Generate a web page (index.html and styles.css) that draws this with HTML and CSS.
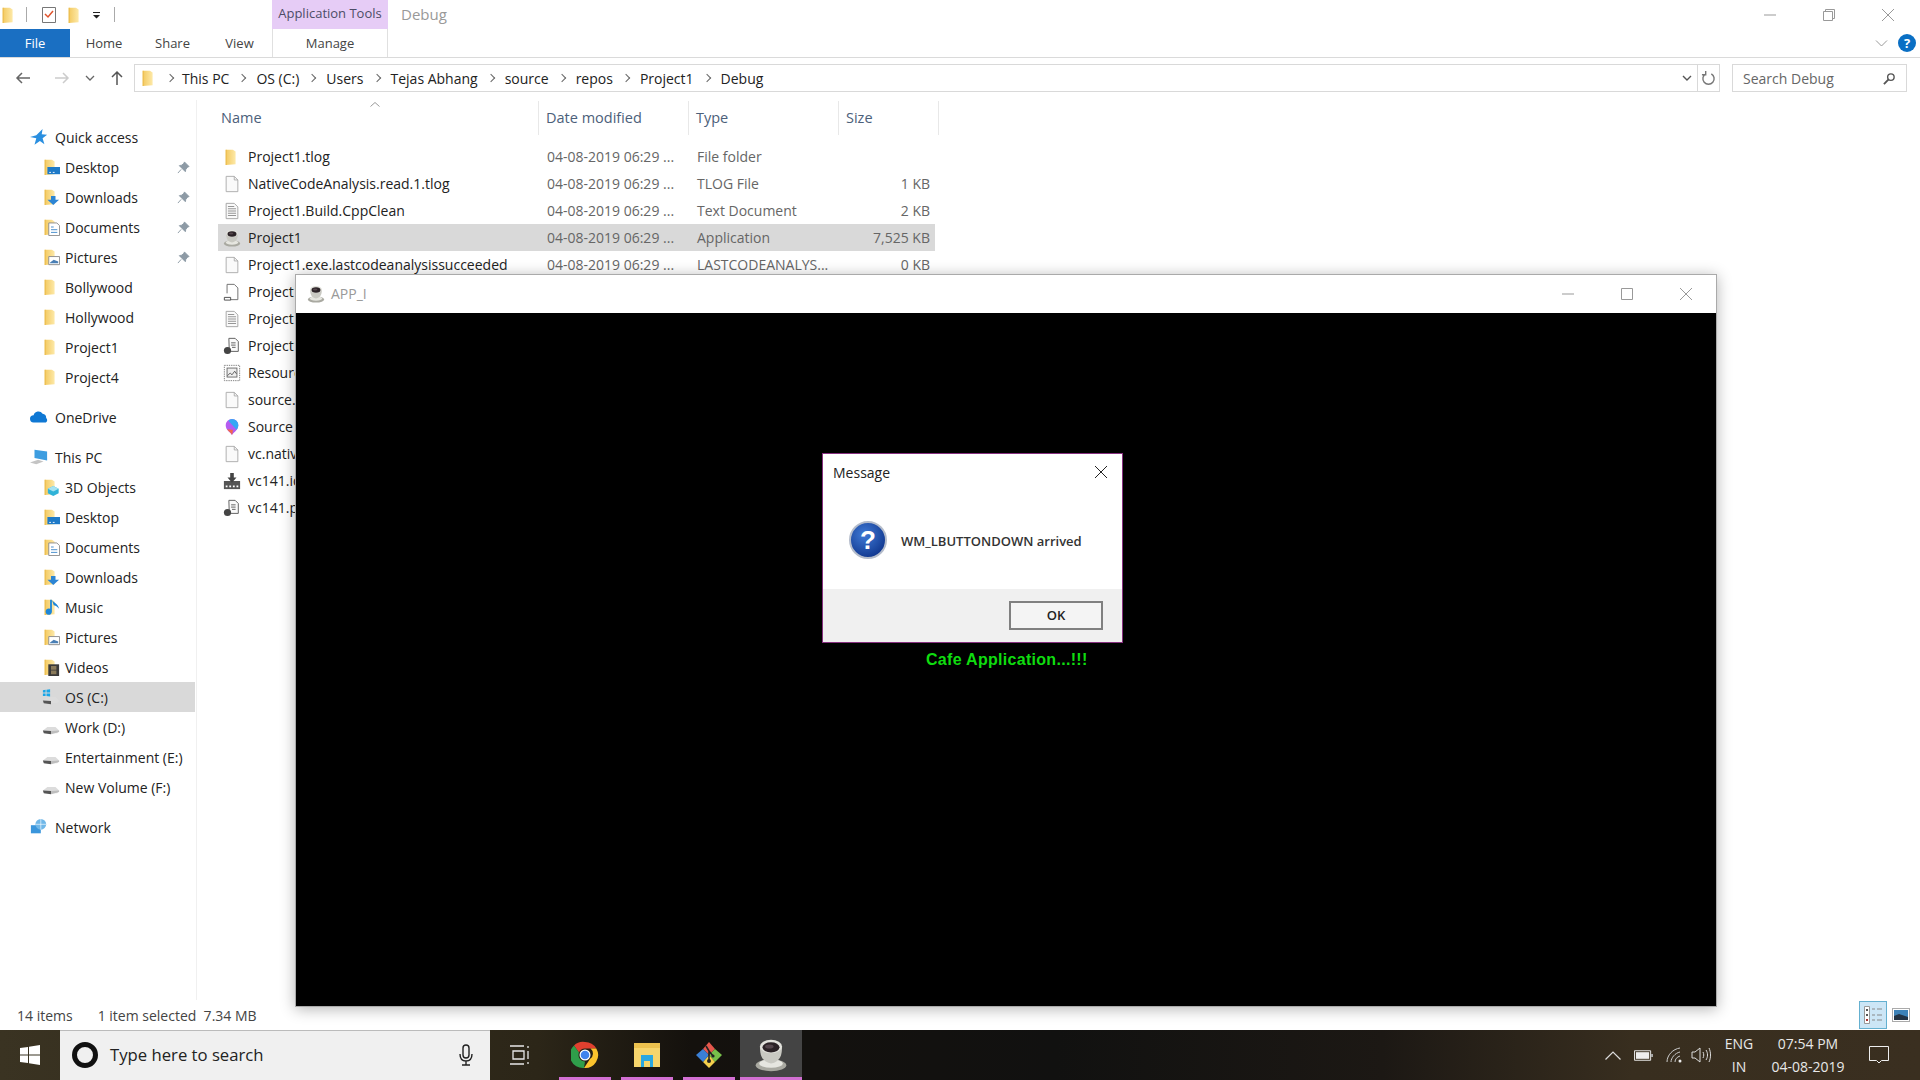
FILE: index.html
```html
<!DOCTYPE html>
<html lang="en">

<head>
    <meta charset="UTF-8">
    <meta name="viewport" content="width=device-width, initial-scale=1.0">
    <title>Debug</title>
    <link rel="stylesheet" href="styles.css">
</head>

<body>

    <!-- Shared icons -->
    <svg class="defs" width="0" height="0">
        <defs>
            <linearGradient id="folderGrad" x1="0" x2="1" y1="0" y2="0">
                <stop offset="0" stop-color="#f3c95f"/>
                <stop offset="1" stop-color="#fde9a8"/>
            </linearGradient>
            <radialGradient id="helpGrad" cx="0.4" cy="0.35" r="0.75">
                <stop offset="0" stop-color="#3f7ad6"/>
                <stop offset="1" stop-color="#0b2f86"/>
            </radialGradient>
            <symbol id="folder" viewBox="0 0 20 20">
                <path d="M3 2h8l3 2v14l-11 1z" fill="url(#folderGrad)"/>
                <path d="M3 2h1v17H3z" fill="#e9b949"/>
            </symbol>
            <symbol id="blank" viewBox="0 0 20 20">
                <path d="M3.500 1.500h9l4 4v13h-13z" fill="#fafafa" stroke="#a9a9a9"/>
                <path d="M12.500 1.500v4h4" fill="none" stroke="#a9a9a9"/>
            </symbol>
            <symbol id="lines" viewBox="0 0 20 20">
                <path d="M3.500 1.500h9l4 4v13h-13z" fill="#fafafa" stroke="#a0a0a0"/>
                <path d="M5.500 5h7M5.500 7.500h9M5.500 10h9M5.500 12.500h9M5.500 15h9" stroke="#8a8a8a"/>
            </symbol>
            <symbol id="linkdoc" viewBox="0 0 20 20">
                <path d="M4.500 1.500h8l4 4v13h-9M4.500 1.500v10" fill="none" stroke="#666"/>
                <path d="M1.500 16h7v3h-7z" fill="#fff" stroke="#444"/>
            </symbol>
            <symbol id="pdb" viewBox="0 0 20 20">
                <path d="M6.500 1.500h7l3.500 3.500v11h-10z" fill="#fafafa" stroke="#555"/>
                <path d="M9 6.500h5M9 9h5M10 11.500h4" stroke="#555"/>
                <circle cx="5" cy="15" r="4" fill="#444"/>
            </symbol>
            <symbol id="res" viewBox="0 0 20 20">
                <rect x="1.500" y="1.500" width="17" height="17" fill="#fff" stroke="#777" stroke-dasharray="1.500 1"/>
                <rect x="4.500" y="4.500" width="11" height="10" fill="#eee" stroke="#666"/>
                <path d="M5 13l3-3 2 2 3-4 2 3" fill="none" stroke="#555"/>
            </symbol>
            <symbol id="balloon" viewBox="0 0 20 20">
                <path d="M10 19c-1-3-7-5-7-11a7 7 0 0 1 14 0c0 6-6 8-7 11z" fill="#b45cf0"/>
                <path d="M10 1a7 7 0 0 1 7 7c0 2-1 4-2 5L6 3c1-1 2.500-2 4-2z" fill="#35a8f5"/>
                <path d="M10 19c-1-3-4-4-5.500-6.500L11 13c0 2-.5 4-1 6z" fill="#f2674e"/>
            </symbol>
            <symbol id="ilk" viewBox="0 0 20 20">
                <path d="M1 10h18v9H1z" fill="#555"/>
                <path d="M8 1h4v5h3l-5 6-5-6h3z" fill="#444"/>
                <path d="M3 15h2v2H3zM7 15h2v2H7zM11 15h2v2h-2zM15 15h2v2h-2z" fill="#fff"/>
            </symbol>
            <symbol id="coffee" viewBox="0 0 20 20">
                <ellipse cx="10" cy="16" rx="9" ry="3.500" fill="#a9a9a1"/>
                <ellipse cx="10" cy="15" rx="7" ry="2.500" fill="#e6e6e0"/>
                <path d="M3.500 5h13c0 5-1 9-6.500 10-5.500-1-6.500-5-6.500-10z" fill="#c9c9c2"/>
                <ellipse cx="10" cy="5" rx="6.500" ry="4" fill="#e2e2dc"/>
                <ellipse cx="10" cy="5.500" rx="5" ry="3" fill="#2b2226"/>
                <ellipse cx="9" cy="5" rx="2.500" ry="1.200" fill="#54464c"/>
            </symbol>
            <symbol id="pin" viewBox="0 0 14 14">
                <path d="M8 1l5 5-1.500.5L9.500 9 9 11.500 2.500 5 5 4.500 7.500 2.500zM4.500 9L1 13" fill="#8d9aa5" stroke="#8d9aa5"/>
            </symbol>
            <symbol id="drive" viewBox="0 0 20 20">
                <path d="M1 14l5-4h9l4 4-2 3H3z" fill="#dcdcdc"/>
                <path d="M1 14l9 .5v3.500l-8-1z" fill="#555"/>
                <path d="M10 14.500l9-.5v1.500l-9 2.500z" fill="#bdbdbd"/>
            </symbol>
            <symbol id="winDrive" viewBox="0 0 20 20">
                <path d="M1 14l5-4h9l4 4-2 3H3z" fill="#dcdcdc"/>
                <path d="M1 14l9 .5v3.500l-8-1z" fill="#555"/>
                <path d="M1 2.500l3-.5v3H1zM5 2l4-.5V5H5zM1 6h3v3H1zM5 6h4v3.500L5 9z" fill="#19a6e8"/>
            </symbol>
        </defs>
    </svg>

    <div class="explorer">

        <!-- Title bar -->
        <div class="titlebar">
            <div class="qat">
                <svg class="ico-sm"><use href="#folder"/></svg>
                <span class="qat-sep"></span>
                <svg class="qat-check" viewBox="0 0 16 18">
                    <path d="M1.500 1.500h13v15h-13z" fill="#fff" stroke="#777"/>
                    <path d="M4 8l3 3 5-6" fill="none" stroke="#e0532c" stroke-width="1.500"/>
                </svg>
                <svg class="ico-sm"><use href="#folder"/></svg>
                <svg class="qat-drop" viewBox="0 0 9 8">
                    <path d="M1 1h7v1H1zM1 4h7L4.500 7.500z" fill="#222"/>
                </svg>
                <span class="qat-sep"></span>
            </div>
            <div class="tool-tab">Application Tools</div>
            <div class="win-title">Debug</div>
            <div class="win-controls">
                <svg viewBox="0 0 12 12"><path d="M0 6h12" stroke="#999"/></svg>
                <svg viewBox="0 0 12 12"><path d="M.5 2.500h9v9h-9zM2.500 2.500v-2h9v9h-2" fill="none" stroke="#999"/></svg>
                <svg viewBox="0 0 12 12"><path d="M0 0l12 12M12 0L0 12" stroke="#999"/></svg>
            </div>
        </div>

        <!-- Ribbon tabs -->
        <div class="ribbon">
            <div class="tab tab-file">File</div>
            <div class="tab tab-home">Home</div>
            <div class="tab tab-share">Share</div>
            <div class="tab tab-view">View</div>
            <div class="tab tab-manage">Manage</div>
            <svg class="ribbon-chevron" viewBox="0 0 12 7"><path d="M.5.5L6 6 11.500.5" fill="none" stroke="#999"/></svg>
            <div class="help">?</div>
        </div>

        <!-- Address bar -->
        <div class="addressbar">
            <div class="nav-arrows">
                <svg class="arrow arrow-back" viewBox="0 0 16 14"><path d="M15 7H2M7 2L2 7l5 5" fill="none" stroke="#666" stroke-width="1.500"/></svg>
                <svg class="arrow arrow-fwd" viewBox="0 0 16 14"><path d="M1 7h13M9 2l5 5-5 5" fill="none" stroke="#ccc" stroke-width="1.500"/></svg>
                <svg class="arrow arrow-down" viewBox="0 0 10 7"><path d="M1 1l4 4 4-4" fill="none" stroke="#666" stroke-width="1.300"/></svg>
                <svg class="arrow arrow-up" viewBox="0 0 14 16"><path d="M7 15V2M2 7l5-5 5 5" fill="none" stroke="#555" stroke-width="1.500"/></svg>
            </div>
            <div class="address">
                <svg class="ico-addr"><use href="#folder"/></svg>
                <span class="crumb-sep"></span><span class="crumb">This PC</span>
                <span class="crumb-sep"></span><span class="crumb">OS (C:)</span>
                <span class="crumb-sep"></span><span class="crumb">Users</span>
                <span class="crumb-sep"></span><span class="crumb">Tejas Abhang</span>
                <span class="crumb-sep"></span><span class="crumb">source</span>
                <span class="crumb-sep"></span><span class="crumb">repos</span>
                <span class="crumb-sep"></span><span class="crumb">Project1</span>
                <span class="crumb-sep"></span><span class="crumb">Debug</span>
                <svg class="addr-drop" viewBox="0 0 10 7"><path d="M1 1l4 4 4-4" fill="none" stroke="#555" stroke-width="1.400"/></svg>
                <div class="addr-refresh">
                    <svg viewBox="0 0 16 16"><path d="M5 3a6 6 0 1 0 6 0M5 0v4H1" fill="none" stroke="#777" stroke-width="1.500"/></svg>
                </div>
            </div>
            <div class="search">
                <span>Search Debug</span>
                <svg viewBox="0 0 14 14"><circle cx="8.500" cy="5.500" r="3.500" fill="none" stroke="#555" stroke-width="1.500"/><path d="M6 8l-5 5" stroke="#555" stroke-width="2"/></svg>
            </div>
        </div>

        <div class="main">

            <!-- Navigation pane -->
            <nav class="navpane">
                <div class="nav-group">
                    <div class="nav-item top">
                        <svg class="nav-ico" viewBox="0 0 20 20"><path d="M14 1l-1 6 6 .5-5 4 2 6.500-5-3.500-6 4 2-7L0 10l7-2z" fill="#2a8fe0"/></svg>
                        Quick access
                    </div>
                    <div class="nav-item">
                        <svg class="nav-ico" viewBox="0 0 20 20"><use href="#folder"/><path d="M6 10h14v8H6z" fill="#1e7ac8"/><path d="M8 16h2M12 16h2" stroke="#fff"/></svg>
                        Desktop
                        <svg class="pin"><use href="#pin"/></svg>
                    </div>
                    <div class="nav-item">
                        <svg class="nav-ico" viewBox="0 0 20 20"><use href="#folder"/><path d="M10 9h5v4h4l-6.500 6L6 13h4z" fill="#2c85d4"/></svg>
                        Downloads
                        <svg class="pin"><use href="#pin"/></svg>
                    </div>
                    <div class="nav-item">
                        <svg class="nav-ico" viewBox="0 0 20 20"><use href="#folder"/><path d="M7.500 5.500h9l3 3v11h-12z" fill="#fff" stroke="#888"/><path d="M10 10h3M10 13h7M10 16h7" stroke="#3a86c8"/></svg>
                        Documents
                        <svg class="pin"><use href="#pin"/></svg>
                    </div>
                    <div class="nav-item">
                        <svg class="nav-ico" viewBox="0 0 20 20"><use href="#folder"/><path d="M7.500 9.500h12v9h-12z" fill="#fff" stroke="#888"/><path d="M9 16l4-3 5 2v2H9z" fill="#4a7fb5"/></svg>
                        Pictures
                        <svg class="pin"><use href="#pin"/></svg>
                    </div>
                    <div class="nav-item"><svg class="nav-ico"><use href="#folder"/></svg>Bollywood</div>
                    <div class="nav-item"><svg class="nav-ico"><use href="#folder"/></svg>Hollywood</div>
                    <div class="nav-item"><svg class="nav-ico"><use href="#folder"/></svg>Project1</div>
                    <div class="nav-item"><svg class="nav-ico"><use href="#folder"/></svg>Project4</div>
                </div>

                <div class="nav-group">
                    <div class="nav-item top">
                        <svg class="nav-ico" viewBox="0 0 20 20"><path d="M4 16a4 4 0 0 1 0-8 5.500 5.500 0 0 1 10-1.500A4.500 4.500 0 0 1 18 11c2 2 1 5-1 5z" fill="#0f78d4"/></svg>
                        OneDrive
                    </div>
                </div>

                <div class="nav-group">
                    <div class="nav-item top">
                        <svg class="nav-ico" viewBox="0 0 20 20"><path d="M5 2l14 2v10L5 11z" fill="#3d9de0"/><path d="M0 16l9-3 6 2-8 3z" fill="#c4c4c4"/></svg>
                        This PC
                    </div>
                    <div class="nav-item">
                        <svg class="nav-ico" viewBox="0 0 20 20"><use href="#folder"/><path d="M12.500 9l6 3v5l-6 3-6-3v-5z" fill="#30b3d8"/><path d="M12.500 9l6 3-6 3-6-3z" fill="#a5e3f2"/></svg>
                        3D Objects
                    </div>
                    <div class="nav-item">
                        <svg class="nav-ico" viewBox="0 0 20 20"><use href="#folder"/><path d="M6 10h14v8H6z" fill="#1e7ac8"/><path d="M8 16h2M12 16h2" stroke="#fff"/></svg>
                        Desktop
                    </div>
                    <div class="nav-item">
                        <svg class="nav-ico" viewBox="0 0 20 20"><use href="#folder"/><path d="M7.500 5.500h9l3 3v11h-12z" fill="#fff" stroke="#888"/><path d="M10 10h3M10 13h7M10 16h7" stroke="#3a86c8"/></svg>
                        Documents
                    </div>
                    <div class="nav-item">
                        <svg class="nav-ico" viewBox="0 0 20 20"><use href="#folder"/><path d="M10 9h5v4h4l-6.500 6L6 13h4z" fill="#2c85d4"/></svg>
                        Downloads
                    </div>
                    <div class="nav-item">
                        <svg class="nav-ico" viewBox="0 0 20 20"><use href="#folder"/><path d="M11 2v13a3.500 3.500 0 1 1-2-3V2h2c1 3 7 4 8 10-2-3-5-4-6-4" fill="#1d86d8"/></svg>
                        Music
                    </div>
                    <div class="nav-item">
                        <svg class="nav-ico" viewBox="0 0 20 20"><use href="#folder"/><path d="M7.500 9.500h12v9h-12z" fill="#fff" stroke="#888"/><path d="M9 16l4-3 5 2v2H9z" fill="#4a7fb5"/></svg>
                        Pictures
                    </div>
                    <div class="nav-item">
                        <svg class="nav-ico" viewBox="0 0 20 20"><use href="#folder"/><path d="M7 7h12v13H7z" fill="#3a3a3a"/><path d="M10 9h6v4h-6zM10 14h6v4h-6z" fill="#8a7a5a"/></svg>
                        Videos
                    </div>
                    <div class="nav-item selected"><svg class="nav-ico"><use href="#winDrive"/></svg>OS (C:)</div>
                    <div class="nav-item"><svg class="nav-ico"><use href="#drive"/></svg>Work (D:)</div>
                    <div class="nav-item"><svg class="nav-ico"><use href="#drive"/></svg>Entertainment (E:)</div>
                    <div class="nav-item"><svg class="nav-ico"><use href="#drive"/></svg>New Volume (F:)</div>
                </div>

                <div class="nav-group">
                    <div class="nav-item top">
                        <svg class="nav-ico" viewBox="0 0 20 20"><rect x="1" y="8" width="11" height="9" fill="#3a96dc"/><circle cx="12" cy="7" r="6" fill="#6fb7e8"/><path d="M6 7h12M12 1v12" stroke="#fff" stroke-width=".7"/></svg>
                        Network
                    </div>
                </div>
            </nav>

            <!-- File list -->
            <section class="files">
                <div class="file-head">
                    <div class="col-name">Name</div>
                    <div class="col">Date modified</div>
                    <div class="col">Type</div>
                    <div class="col col-size">Size</div>
                    <svg class="sort" viewBox="0 0 10 5"><path d="M.5 4.500L5 .5l4.500 4" fill="none" stroke="#999"/></svg>
                </div>
                <div class="row">
                    <svg class="file-ico"><use href="#folder"/></svg>
                    <span class="name">Project1.tlog</span><span class="meta">04-08-2019 06:29 ...</span><span class="meta">File folder</span><span class="meta size"></span>
                </div>
                <div class="row">
                    <svg class="file-ico"><use href="#blank"/></svg>
                    <span class="name">NativeCodeAnalysis.read.1.tlog</span><span class="meta">04-08-2019 06:29 ...</span><span class="meta">TLOG File</span><span class="meta size">1 KB</span>
                </div>
                <div class="row">
                    <svg class="file-ico"><use href="#lines"/></svg>
                    <span class="name">Project1.Build.CppClean</span><span class="meta">04-08-2019 06:29 ...</span><span class="meta">Text Document</span><span class="meta size">2 KB</span>
                </div>
                <div class="row active">
                    <svg class="file-ico"><use href="#coffee"/></svg>
                    <span class="name">Project1</span><span class="meta">04-08-2019 06:29 ...</span><span class="meta">Application</span><span class="meta size">7,525 KB</span>
                </div>
                <div class="row">
                    <svg class="file-ico"><use href="#blank"/></svg>
                    <span class="name">Project1.exe.lastcodeanalysissucceeded</span><span class="meta">04-08-2019 06:29 ...</span><span class="meta">LASTCODEANALYS...</span><span class="meta size">0 KB</span>
                </div>
                <div class="row"><svg class="file-ico"><use href="#linkdoc"/></svg><span class="name">Project1.ilk</span></div>
                <div class="row"><svg class="file-ico"><use href="#lines"/></svg><span class="name">Project1.log</span></div>
                <div class="row"><svg class="file-ico"><use href="#pdb"/></svg><span class="name">Project1.pdb</span></div>
                <div class="row"><svg class="file-ico"><use href="#res"/></svg><span class="name">Resource.res</span></div>
                <div class="row"><svg class="file-ico"><use href="#blank"/></svg><span class="name">source.obj</span></div>
                <div class="row"><svg class="file-ico"><use href="#balloon"/></svg><span class="name">Source</span></div>
                <div class="row"><svg class="file-ico"><use href="#blank"/></svg><span class="name">vc.native</span></div>
                <div class="row"><svg class="file-ico"><use href="#ilk"/></svg><span class="name">vc141.idb</span></div>
                <div class="row"><svg class="file-ico"><use href="#pdb"/></svg><span class="name">vc141.pdb</span></div>
            </section>
        </div>

        <!-- Status bar -->
        <div class="statusbar">
            <span class="status-count">14 items</span>
            <span>1 item selected&nbsp; 7.34 MB</span>
            <div class="views">
                <div class="view view-on">
                    <svg viewBox="0 0 20 20">
                        <path d="M1.500 1.500h5v17h-5z" fill="#fff" stroke="#999"/>
                        <path d="M3 4h2v2H3zM3 9h2v2H3z" fill="#555"/>
                        <path d="M3 14h2v2H3z" fill="#a33"/>
                        <path d="M9 4h3M14 4h5M9 10h3M14 10h5M9 15h3M14 15h5" stroke="#888"/>
                    </svg>
                </div>
                <div class="view">
                    <svg viewBox="0 0 18 14">
                        <rect x=".5" y=".5" width="17" height="13" fill="#fff" stroke="#aaa"/>
                        <rect x="2" y="2" width="14" height="10" fill="#3c82b8"/>
                        <path d="M2 8l5-2 9 3v3H2z" fill="#234"/>
                    </svg>
                </div>
            </div>
        </div>
    </div>

    <!-- Taskbar -->
    <footer class="taskbar">
        <div class="start">
            <svg viewBox="0 0 20 20"><path d="M0 3l8-1.100V9.500H0zM9 1.700L20 0v9.500H9zM0 10.500h8v7.600L0 17zM9 10.500h11V20L9 18.300z" fill="#fff"/></svg>
        </div>
        <div class="tb-search">
            <span class="cortana"></span>
            <span class="tb-search-text">Type here to search</span>
            <svg class="mic" viewBox="0 0 14 22"><rect x="4" y="1" width="6" height="13" rx="3" fill="none" stroke="#222" stroke-width="1.400"/><path d="M1 10c0 5 2 7 6 7s6-2 6-7M7 17v4M3 21h8" fill="none" stroke="#222" stroke-width="1.400"/></svg>
        </div>
        <div class="taskview">
            <svg viewBox="0 0 20 20"><path d="M0 1h14M0 19h14M3 6h11v8H3z" fill="none" stroke="#e8e8e8" stroke-width="1.300"/><path d="M18 1v2M18 6v8M18 17v2" stroke="#e8e8e8" stroke-width="1.300"/></svg>
        </div>
        <div class="task running">
            <svg viewBox="0 0 28 28">
                <path d="M14 1a13 13 0 0 1 11.300 6.500H14a6.500 6.500 0 0 0-6 4L3 4.500A13 13 0 0 1 14 1z" fill="#e0402f"/>
                <path d="M25.300 7.500A13 13 0 0 1 13 27l6-9a6.500 6.500 0 0 0 .5-10.500z" fill="#fbc32d"/>
                <path d="M3 4.500l5 7a6.500 6.500 0 0 0 6 9l-1 6.500A13 13 0 0 1 3 4.500z" fill="#2f9e4a"/>
                <circle cx="14" cy="14" r="5.500" fill="#fff"/>
                <circle cx="14" cy="14" r="4.300" fill="#3f83ee"/>
            </svg>
        </div>
        <div class="task running">
            <svg viewBox="0 0 28 28">
                <path d="M1 2h10l2 3h14v21H1z" fill="#f6d56c"/>
                <path d="M1 2h26v5H1z" fill="#ecc14e"/>
                <path d="M8 14h12v12h-3v-6h-6v6H8z" fill="#2aa7e0"/>
            </svg>
        </div>
        <div class="task running">
            <svg viewBox="0 0 28 28">
                <path d="M14 1l6 7-6 6-6-6z" fill="#e4574c"/>
                <path d="M20 8l7 6-7 7-6-7z" fill="#77c04a"/>
                <path d="M14 14l6 7-6 6-6-6z" fill="#f4cf4c"/>
                <path d="M8 8l6 6-6 7-7-7z" fill="#3a7fd5"/>
                <path d="M11 5l3 5 4 5M14 10v10" fill="none" stroke="#222" stroke-width="1.600"/>
                <circle cx="14" cy="20" r="2" fill="#222"/>
                <circle cx="18" cy="15" r="1.600" fill="#222"/>
            </svg>
        </div>
        <div class="task task-app">
            <svg><use href="#coffee"/></svg>
        </div>
        <div class="tray">
            <svg class="tray-chev" viewBox="0 0 16 9"><path d="M.5 8.500L8 1l7.500 7.500" fill="none" stroke="#ddd" stroke-width="1.200"/></svg>
            <svg class="tray-batt" viewBox="0 0 20 11"><path d="M.5.5h17v10H.5z" fill="none" stroke="#eee"/><path d="M2 2h14v7H2z" fill="#eee"/><path d="M18 4h2v3h-2z" fill="#aaa"/></svg>
            <svg class="tray-wifi" viewBox="0 0 16 16"><path d="M1 15C1 8 7 2 14 1M5 15c0-4 4-9 9-10M9 15c0-3 2-5 5-6" fill="none" stroke="#ccc"/><circle cx="14" cy="14" r="1.500" fill="#eee"/></svg>
            <svg class="tray-vol" viewBox="0 0 20 16"><path d="M1 5h3l5-4v14l-5-4H1z" fill="none" stroke="#ddd"/><path d="M12 5c1 2 1 4 0 6M15 3c2 3 2 7 0 10M18 1c2 4 2 10 0 14" fill="none" stroke="#ddd"/></svg>
            <div class="tray-lang"><span>ENG</span><span>IN</span></div>
            <div class="tray-clock"><span>07:54 PM</span><span>04-08-2019</span></div>
            <svg class="tray-note" viewBox="0 0 20 18"><path d="M.5.5h19v14h-7l-2.500 2.500L7.500 14.500h-7z" fill="none" stroke="#eee"/></svg>
        </div>
    </footer>

    <!-- Application window over the explorer -->
    <div class="app-window">
        <div class="app-title">
            <svg class="app-ico"><use href="#coffee"/></svg>
            <span class="app-name">APP_I</span>
            <div class="app-controls">
                <svg viewBox="0 0 12 12"><path d="M0 6h12" stroke="#999"/></svg>
                <svg viewBox="0 0 12 12"><path d="M.5.5h11v11H.5z" fill="none" stroke="#999"/></svg>
                <svg viewBox="0 0 12 12"><path d="M0 0l12 12M12 0L0 12" stroke="#999"/></svg>
            </div>
        </div>
        <div class="app-client"></div>
    </div>

    <div class="cafe">Cafe Application...!!!</div>

    <!-- Message box -->
    <div class="msgbox">
        <div class="msg-title">
            <span>Message</span>
            <svg viewBox="0 0 12 12"><path d="M0 0l12 12M12 0L0 12" stroke="#222"/></svg>
        </div>
        <div class="msg-body">
            <svg class="msg-ico" viewBox="0 0 38 38">
                <circle cx="19" cy="19" r="18" fill="url(#helpGrad)" stroke="#b4bccb" stroke-width="2"/>
                <text x="19" y="28" text-anchor="middle" class="msg-q">?</text>
            </svg>
            <span class="msg-text">WM_LBUTTONDOWN arrived</span>
        </div>
        <div class="msg-foot">
            <div class="msg-ok">OK</div>
        </div>
    </div>

</body>

</html>
```

FILE: styles.css
```css
html,
body {
    margin: 0;
    height: 1080px;
    overflow: hidden;
    background-color: #fff;
}

body {
    position: relative;
    font-family: "Open Sans", "Noto Sans", sans-serif;
    font-size: 14px;
    color: #222;
}

.defs {
    position: absolute;
}

svg {
    display: block;
    flex: none;
}

.explorer {
    display: flex;
    flex-direction: column;
    height: 1030px;
}

/* Title bar */
.titlebar {
    display: flex;
    height: 29px;
}

.qat {
    display: flex;
    align-items: center;
    width: 272px;
    box-sizing: border-box;
}

.ico-sm {
    width: 18px;
    height: 18px;
}

.qat-sep {
    width: 1px;
    height: 15px;
    background-color: #aaa;
    margin: 0 14px 0 8px;
}

.qat-check {
    width: 16px;
    height: 18px;
    margin-right: 9px;
}

.qat-drop {
    width: 9px;
    height: 8px;
    margin-left: 8px;
}

.qat .qat-sep:last-child {
    margin-left: 13px;
}

.tool-tab {
    width: 116px;
    background-color: #e6ccf6;
    color: #4c4c66;
    font-size: 13px;
    text-align: center;
    line-height: 27px;
}

.win-title {
    margin-left: 13px;
    color: #999;
    font-size: 15px;
    line-height: 29px;
}

.win-controls {
    display: flex;
    align-items: center;
    gap: 47px;
    margin-left: auto;
    padding-right: 26px;
}

.win-controls svg {
    width: 12px;
    height: 12px;
}

/* Ribbon */
.ribbon {
    display: flex;
    align-items: center;
    height: 28px;
    border-bottom: 1px solid #dadada;
    font-size: 13px;
    color: #444;
}

.tab {
    line-height: 28px;
    text-align: center;
}

.tab-file {
    width: 70px;
    background-color: #1a6fc2;
    color: #fff;
}

.tab-home {
    width: 68px;
}

.tab-share {
    width: 69px;
}

.tab-view {
    width: 65px;
}

.tab-manage {
    width: 116px;
    box-sizing: border-box;
    border-left: 1px solid #e0e0e0;
    border-right: 1px solid #e0e0e0;
}

.ribbon-chevron {
    width: 13px;
    height: 7px;
    margin-left: auto;
}

.help {
    width: 18px;
    height: 18px;
    margin: 0 4px 0 10px;
    border-radius: 50%;
    background-color: #0a6fc4;
    color: #fff;
    font-size: 13px;
    font-weight: 700;
    line-height: 18px;
    text-align: center;
}

/* Address bar */
.addressbar {
    display: flex;
    align-items: center;
    height: 42px;
    padding: 0 12px 2px 0;
    box-sizing: border-box;
}

.nav-arrows {
    display: flex;
    align-items: center;
    width: 134px;
    flex: none;
}

.arrow-back {
    width: 16px;
    height: 14px;
    margin-left: 15px;
}

.arrow-fwd {
    width: 16px;
    height: 14px;
    margin-left: 23px;
}

.arrow-down {
    width: 10px;
    height: 7px;
    margin-left: 15px;
}

.arrow-up {
    width: 14px;
    height: 16px;
    margin-left: 15px;
}

.address {
    display: flex;
    align-items: center;
    width: 1586px;
    height: 28px;
    box-sizing: border-box;
    border: 1px solid #d9d9d9;
    padding-left: 5px;
    font-size: 14px;
    color: #222;
}

.ico-addr {
    width: 18px;
    height: 18px;
}

.crumb-sep {
    width: 5px;
    height: 5px;
    margin: 0 11px 0 10px;
    border-top: 1px solid #666;
    border-right: 1px solid #666;
    transform: rotate(45deg);
}

.ico-addr + .crumb-sep {
    margin-left: 9px;
    margin-right: 9px;
}

.addr-drop {
    width: 10px;
    height: 7px;
    margin-left: auto;
    margin-right: 5px;
}

.addr-refresh {
    display: flex;
    align-items: center;
    justify-content: center;
    width: 21px;
    height: 100%;
    border-left: 1px solid #d9d9d9;
}

.addr-refresh svg {
    width: 15px;
    height: 15px;
}

.search {
    display: flex;
    align-items: center;
    justify-content: space-between;
    width: 175px;
    height: 28px;
    margin-left: 12px;
    box-sizing: border-box;
    border: 1px solid #d9d9d9;
    padding: 0 10px;
    font-size: 14px;
    color: #666;
}

.search svg {
    width: 13px;
    height: 13px;
}

/* Main area */
.main {
    display: flex;
    flex: 1;
    min-height: 0;
}

.navpane {
    width: 197px;
    padding-top: 22px;
    border-right: 1px solid #f0f0f0;
    box-sizing: border-box;
}

.nav-group {
    margin-bottom: 10px;
}

.nav-item {
    display: flex;
    align-items: center;
    width: 195px;
    height: 30px;
    padding-left: 42px;
    box-sizing: border-box;
}

.nav-item.top {
    padding-left: 30px;
}

.nav-item.selected {
    background-color: #d9d9d9;
}

.nav-ico {
    width: 18px;
    height: 18px;
    margin-right: 5px;
}

.nav-item.top .nav-ico {
    margin-right: 7px;
}

.pin {
    width: 13px;
    height: 13px;
    margin-left: auto;
    margin-right: 5px;
}

.files {
    position: relative;
    flex: 1;
    padding-left: 21px;
}

.file-head {
    display: flex;
    align-items: flex-start;
    height: 42px;
    padding-top: 1px;
    color: #4c607a;
    font-size: 14.5px;
}

.col-name {
    width: 321px;
    padding-left: 3px;
    height: 34px;
    line-height: 34px;
    box-sizing: border-box;
    border-right: 1px solid #e8e8e8;
}

.col {
    width: 150px;
    height: 34px;
    line-height: 34px;
    padding-left: 7px;
    box-sizing: border-box;
    border-right: 1px solid #e8e8e8;
}

.col-size {
    width: 100px;
}

.sort {
    position: absolute;
    left: 173px;
    top: 2px;
    width: 10px;
    height: 5px;
}

.row {
    display: grid;
    grid-template-columns: 30px 299px 150px 150px 88px;
    align-items: center;
    width: 717px;
    height: 27px;
    white-space: nowrap;
}

.row.active {
    background-color: #d9d9d9;
}

.file-ico {
    width: 18px;
    height: 18px;
    margin-left: 5px;
}

.meta {
    color: #666;
}

.meta.size {
    text-align: right;
    padding-right: 5px;
}

/* Status bar */
.statusbar {
    display: flex;
    align-items: center;
    flex: none;
    height: 30px;
    padding-left: 17px;
    font-size: 14px;
    color: #444;
}

.status-count {
    margin-right: 25px;
}

.views {
    display: flex;
    align-items: center;
    gap: 5px;
    margin-left: auto;
    padding-right: 10px;
}

.view svg {
    width: 18px;
    height: 14px;
}

.view-on {
    display: flex;
    align-items: center;
    justify-content: center;
    width: 28px;
    height: 28px;
    box-sizing: border-box;
    border: 1px solid #64b0d0;
    background-color: #cce6f6;
}

.view-on svg {
    width: 20px;
    height: 20px;
}

/* Taskbar */
.taskbar {
    display: flex;
    height: 50px;
    color: #e8e8e8;
    background: linear-gradient(90deg, #3a3322 0%, #2c2618 28%, #14110d 36%, #111110 55%, #1c1814 72%, #382e1f 85%, #3a2f20 100%);
}

.start {
    display: flex;
    align-items: center;
    justify-content: center;
    width: 60px;
}

.start svg {
    width: 20px;
    height: 20px;
}

.tb-search {
    display: flex;
    align-items: center;
    width: 430px;
    box-sizing: border-box;
    padding: 0 17px 2px 12px;
    background-color: #f0f0f0;
    border-top: 1px solid #bbb;
    color: #222;
    font-size: 16.7px;
}

.cortana {
    width: 16px;
    height: 16px;
    border: 5px solid #111;
    border-radius: 50%;
}

.tb-search-text {
    margin-left: 12px;
}

.mic {
    width: 14px;
    height: 22px;
    margin-left: auto;
}

.taskview {
    display: flex;
    align-items: center;
    width: 64px;
    padding-left: 20px;
    box-sizing: border-box;
}

.taskview svg {
    width: 20px;
    height: 20px;
}

.task {
    display: flex;
    align-items: center;
    justify-content: center;
    width: 62px;
    position: relative;
}

.task svg {
    width: 28px;
    height: 28px;
}

.task.running::after,
.task-app::after {
    content: "";
    position: absolute;
    left: 5px;
    right: 5px;
    bottom: 0;
    height: 3px;
    background-color: #d26fd2;
}

.task-app {
    background-color: #444;
}

.task-app::after {
    left: 0;
    right: 0;
}

.task-app svg {
    width: 34px;
    height: 34px;
}

.tray {
    display: flex;
    align-items: center;
    margin-left: auto;
    padding-right: 31px;
    font-size: 14px;
    text-align: center;
}

.tray-chev {
    width: 16px;
    height: 9px;
}

.tray-batt {
    width: 19px;
    height: 11px;
    margin-left: 13px;
}

.tray-wifi {
    width: 16px;
    height: 16px;
    margin-left: 13px;
}

.tray-vol {
    width: 20px;
    height: 16px;
    margin-left: 9px;
}

.tray-lang,
.tray-clock {
    display: flex;
    flex-direction: column;
    gap: 1px;
    line-height: 22px;
}

.tray-lang {
    margin-left: 11px;
    width: 34px;
}

.tray-clock {
    margin-left: 12px;
    width: 80px;
}

.tray-note {
    width: 20px;
    height: 18px;
    margin-left: 21px;
}

/* Application window */
.app-window {
    position: absolute;
    left: 295px;
    top: 274px;
    width: 1422px;
    height: 733px;
    box-sizing: border-box;
    border: 1px solid #aaa;
    display: flex;
    flex-direction: column;
    background-color: #fff;
    box-shadow: 0 2px 14px rgba(0, 0, 0, 0.3);
}

.app-title {
    display: flex;
    align-items: center;
    height: 38px;
    flex: none;
    padding-left: 11px;
    color: #999;
}

.app-name {
    margin-bottom: 2px;
}

.app-ico {
    width: 18px;
    height: 18px;
    margin-right: 6px;
}

.app-controls {
    display: flex;
    gap: 47px;
    margin-left: auto;
    padding-right: 24px;
}

.app-controls svg {
    width: 12px;
    height: 12px;
}

.app-client {
    flex: 1;
    background-color: #000;
}

.cafe {
    position: absolute;
    left: 926px;
    top: 648px;
    color: #0fdc0f;
    font-family: "Liberation Sans", sans-serif;
    font-size: 16px;
    font-weight: 700;
    letter-spacing: 0.3px;
    line-height: 24px;
}

/* Message box */
.msgbox {
    position: absolute;
    left: 822px;
    top: 453px;
    width: 301px;
    height: 190px;
    box-sizing: border-box;
    border: 1px solid #86307f;
    display: flex;
    flex-direction: column;
    background-color: #fff;
}

.msg-title {
    display: flex;
    align-items: center;
    justify-content: space-between;
    height: 36px;
    padding: 0 15px 0 10px;
}

.msg-title svg {
    width: 12px;
    height: 12px;
}

.msg-body {
    display: flex;
    align-items: center;
    flex: 1;
    padding-left: 26px;
}

.msg-ico {
    width: 38px;
    height: 38px;
    margin-right: 14px;
}

.msg-q {
    fill: #fff;
    font-family: "Liberation Sans", sans-serif;
    font-size: 26px;
    font-weight: 700;
}

.msg-text {
    margin-top: 3px;
    font-size: 13px;
    font-weight: 600;
    color: #333;
    white-space: nowrap;
}

.msg-foot {
    display: flex;
    align-items: center;
    justify-content: flex-end;
    height: 53px;
    padding-right: 19px;
    background-color: #f0f0f0;
}

.msg-ok {
    width: 94px;
    height: 29px;
    box-sizing: border-box;
    border: 2px solid #808080;
    background-color: #f4f4f4;
    font-size: 13px;
    font-weight: 600;
    text-align: center;
    line-height: 25px;
}
```
